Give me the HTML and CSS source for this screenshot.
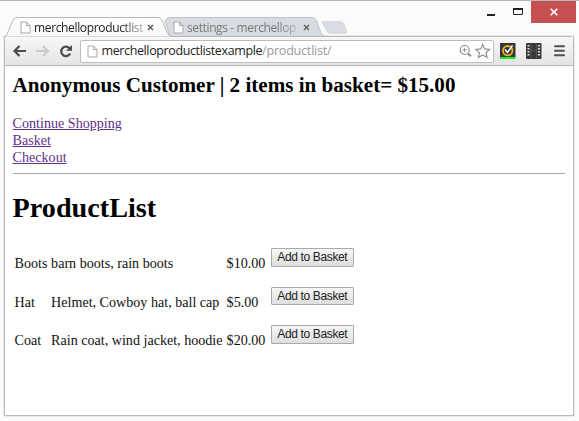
FILE: index.html
```
<!DOCTYPE html>
<html lang="en">
<head>
<meta charset="utf-8">
<title>merchelloproductlistexample</title>
<link rel="stylesheet" href="styles.css">
</head>
<body>
<div class="window">
  <header class="titlebar">
    <svg class="tab-shapes" width="579" height="37" viewBox="0 0 579 37">
      <defs>
        <linearGradient id="front" x1="0" y1="0" x2="0" y2="1"><stop offset="0" stop-color="#fff"/><stop offset="1" stop-color="#f7f7f7"/></linearGradient>
      </defs>
      <path d="M165 21Q166.500 17.500 170 17.500H312Q315 17.500 316.500 20.500L320.500 32Q322 36 325 36.500H170Z" fill="#d7dce3" stroke="#bfc3c8"/>
      <path d="M323 21H340Q343 21 344 23L347 31Q348 34 344 34H331Q328 34 327 32L322 23Q321 21 323 21Z" fill="#d7dce3"/>
      <path d="M4.500 37Q7 35 8 32L12.500 21Q14 17.500 17 17.500H158Q161 17.500 162.500 21L167 32Q168.500 36 172 36.500V37Z" fill="url(#front)" stroke="#b8b8b8"/>
      <path d="M171 36.500H572" stroke="#b8b8b8"/>
    </svg>
    <div class="tab tab-front">
      <svg class="page" width="11" height="13" viewBox="0 0 11 13"><path d="M1 1H6.500L10 4.500V12H1ZM6.500 1V4.500H10"/></svg>
      <span class="tab-title">merchelloproductlist</span>
      <svg class="tab-close" width="7" height="7" viewBox="0 0 7 7"><path d="M1 1L6 6M6 1L1 6"/></svg>
    </div>
    <div class="tab tab-back">
      <svg class="page" width="11" height="13" viewBox="0 0 11 13"><path d="M1 1H6.500L10 4.500V12H1ZM6.500 1V4.500H10"/></svg>
      <span class="tab-title">settings - merchellop</span>
      <svg class="tab-close" width="7" height="7" viewBox="0 0 7 7"><path d="M1 1L6 6M6 1L1 6"/></svg>
    </div>
    <div class="controls">
      <svg width="40" height="20" viewBox="0 0 40 20"><path d="M0 15H8" stroke="#222" stroke-width="2"/><path d="M26.500 8V14.500H35.500V8" fill="none" stroke="#222"/><path d="M26 9H36" stroke="#222" stroke-width="2"/></svg>
      <div class="close"><svg width="8" height="8" viewBox="0 0 8 8"><path d="M.7.7L7.300 7.300M7.300.7L.7 7.300" stroke="#fff" stroke-width="1.600"/></svg></div>
    </div>
  </header>
  <main class="frame">
    <nav class="toolbar">
      <svg class="nav-icons" width="62" height="14" viewBox="0 0 62 14" fill="none">
        <path d="M14 7H3M7.500 2L2.500 7L7.500 12" stroke="#4d4d4d" stroke-width="2.200"/>
        <path d="M24 7H35M31 2L36 7L31 12" stroke="#c9c9c9" stroke-width="2"/>
        <path d="M57.500 4.300A4.700 4.700 0 1 0 58.100 9.500" stroke="#4d4d4d" stroke-width="2.300"/><path d="M60 1V6.700H54Z" fill="#4d4d4d"/>
      </svg>
      <div class="address">
        <svg class="page" width="11" height="13" viewBox="0 0 11 13"><path d="M1 1H6.500L10 4.500V12H1ZM6.500 1V4.500H10"/></svg>
        <span class="url">merchelloproductlistexample<span class="path">/productlist/</span></span>
        <svg class="marks" width="32" height="16" viewBox="0 0 32 16" fill="none" stroke="#909090">
          <circle cx="5.700" cy="7" r="4.500" stroke-width="1.200"/><path d="M3.500 7H8M5.700 4.800V9.200"/><path d="M9 10.500L12 13.300" stroke-width="2.200"/>
          <path d="M23.700 1.500L25.700 5.900L30.500 6.400L27 9.700L28 14.400L23.700 12L19.400 14.400L20.400 9.700L16.900 6.400L21.700 5.900Z" stroke-width="1.200"/>
        </svg>
      </div>
      <svg class="extensions" width="66" height="16" viewBox="0 0 66 16">
        <path d="M0 0H15.500V14H0Z" fill="#34383c"/><path d="M0 14H15.500V16H0Z" fill="#16ee1d"/>
        <circle cx="7.700" cy="7.700" r="4.700" fill="none" stroke="#f3ad20" stroke-width="1.800"/><path d="M5 6.500L7.500 9.500L12.500 2.500" fill="none" stroke="#fff" stroke-width="1.500"/>
        <rect x="26" y="0" width="15.500" height="16" rx="1" fill="#383838"/>
        <path d="M28.500 2V14M39 2V14" stroke="#ddd" stroke-width="2" stroke-dasharray="1.500 1.500"/><path d="M31 1V15M36.500 1V15M31 7.500H36.500" stroke="#555"/>
        <path d="M55 3.200H64M55 7.700H64M55 12.200H64" stroke="#505050" stroke-width="2" stroke-linecap="round"/>
      </svg>
    </nav>
    <section class="content">
      <h2>Anonymous Customer | 2 items in basket= $15.00</h2>
      <div class="links">
        <a href="#">Continue Shopping</a>
        <a href="#">Basket</a>
        <a href="#">Checkout</a>
      </div>
      <hr>
      <h1>ProductList</h1>
      <div class="products">
        <span>Boots</span><span>barn boots, rain boots</span><span>$10.00</span><button>Add to Basket</button>
        <span>Hat</span><span>Helmet, Cowboy hat, ball cap</span><span>$5.00</span><button>Add to Basket</button>
        <span>Coat</span><span>Rain coat, wind jacket, hoodie</span><span>$20.00</span><button>Add to Basket</button>
      </div>
    </section>
  </main>
</div>
</body>
</html>
```
FILE: styles.css
```
* { box-sizing: border-box; }
body { margin: 0; overflow: hidden; }
svg { display: block; flex: none; }
.window { width: 579px; height: 421px; background: #fbfbfb; border-top: 1px solid #b9b9b9; }
.titlebar { position: relative; height: 35px; display: flex; }
.tab-shapes { position: absolute; left: 0; top: -1px; }
.tab { position: relative; display: flex; align-items: center; height: 19px; margin-top: 17px; font: 12px/19px "Open Sans", sans-serif; letter-spacing: -0.35px; }
.tab-front { width: 154px; padding-left: 20px; color: #222; }
.tab-back { width: 163px; padding-left: 19px; color: #777; }
.tab-title { width: 112px; margin-left: 3px; overflow: hidden; white-space: nowrap; -webkit-mask-image: linear-gradient(90deg, #000 80%, transparent 108%); mask-image: linear-gradient(90deg, #000 80%, transparent 108%); }
.tab-back .tab-title { letter-spacing: -0.38px; }
.tab-close { margin-left: 4px; fill: none; stroke: #666; stroke-width: 1.6; }
.page { fill: #fff; stroke: #aaa; }
.controls { display: flex; margin-left: auto; margin-right: 3px; }
.controls > svg { margin-right: 4px; margin-top: -1px; }
.close { width: 45px; height: 22px; background: #c75050; display: flex; align-items: center; justify-content: center; }
.frame { width: 570px; height: 380px; margin-left: 4px; border: solid #bcbcbc; border-width: 0 1px 1px; box-shadow: 0 0 1px #999; background: #fff; }
.toolbar { display: flex; align-items: center; height: 30px; padding: 1px 0 0 7px; background: linear-gradient(#f8f8f8, #e4e4e4); border-bottom: 1px solid #b9b9b9; }
.address { width: 414px; height: 23px; margin-left: 6px; padding: 0 2px 0 6px; display: flex; align-items: center; background: #fff; border: 1px solid #bdbdbd; border-radius: 2px; }
.url { margin-left: 3.5px; font: 12.5px/20px "Open Sans", sans-serif; letter-spacing: -0.38px; color: #222; white-space: nowrap; }
.path { color: #999; letter-spacing: -0.2px; }
.marks { margin-left: auto; }
.extensions { margin-left: 6px; }
.content { padding: 0 8px 0 7.6px; font: 14.1px/16.8px "Liberation Serif", serif; color: #111; }
h1, h2 { margin: 0; color: #000; white-space: nowrap; }
h2 { height: 49px; font-size: 21.1px; line-height: 39px; }
.links { height: 51px; display: flex; flex-direction: column; align-items: flex-start; }
a { color: #5f3089; text-decoration: underline; }
hr { margin: 7px 0 0; border: 0; height: 1px; background: #a5a5a5; }
h1 { height: 70px; font-size: 28.2px; line-height: 68px; }
.products { display: grid; grid-template-columns: 36.5px 175.5px 44px 83px; grid-auto-rows: 38.5px; margin-left: 2px; line-height: 39px; white-space: nowrap; }
button { width: 83.5px; height: 18.5px; margin: 4px 0 0; padding: 0; border: 1px solid #aaa; border-radius: 1px; background: linear-gradient(#f6f6f6, #dedede); font: 12px/16px "Liberation Sans", sans-serif; letter-spacing: -0.36px; color: #222; }
```
